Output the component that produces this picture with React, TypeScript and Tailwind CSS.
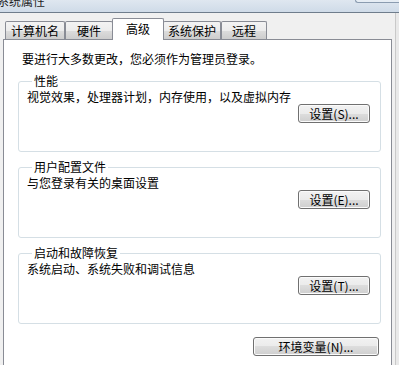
import React from 'react';

const font = "font-['Noto_Sans_CJK_SC','Noto_Sans_CJK_JP',sans-serif]";

const Tab = ({ label, width, active }: { label: string; width: string; active?: boolean }) =>
  active ? (
    <div
      className={`${width} h-[22px] -mb-px -mx-px z-10 bg-white border border-b-0 border-[#898c95] rounded-t-[2px] flex items-start justify-center pt-[3px] text-[12px] leading-[14px] text-black`}
    >
      {label}
    </div>
  ) : (
    <div
      className={`${width} h-[18px] bg-[linear-gradient(to_bottom,#f3f3f3_0%,#ececec_50%,#dddddd_50%,#cdcdcd_100%)] border border-b-0 border-[#898c95] rounded-t-[2px] flex items-center justify-center text-[12px] leading-[14px] text-black`}
    >
      {label}
    </div>
  );

const WinButton = ({ label, width }: { label: string; width: string }) => (
  <button
    className={`${width} h-[19px] border border-[#707070] rounded-[3px] bg-[linear-gradient(to_bottom,#f2f2f2_0%,#ebebeb_50%,#dddddd_50%,#cfcfcf_100%)] shadow-[inset_0_0_0_1px_#fbfbfb] text-[12px] leading-[14px] text-black flex items-center justify-center`}
  >
    {label}
  </button>
);

const Group = ({ title, desc, button }: { title: string; desc: string; button: string }) => (
  <fieldset className="border border-[#d5dfe5] rounded-[3px] h-[78px] mx-[0px] px-[8px] pb-[9px] flex flex-col">
    <legend className="ml-[5px] px-[2px] text-[12px] leading-[14px] text-black">{title}</legend>
    <div className="text-[12px] leading-[14px] text-black pt-[2px]">{desc}</div>
    <div className="flex-1" />
    <div className="flex justify-end pr-[2px]">
      <WinButton label={button} width="w-[72px]" />
    </div>
  </fieldset>
);

export default function App() {
  return (
    <div className={`w-[399px] h-[365px] overflow-hidden bg-[#f0f0f0] flex flex-col ${font}`}>
      {/* title bar remnant */}
      <div className="h-[13px] shrink-0 bg-[linear-gradient(to_bottom,#dfe7f0,#cfdbe8)] border-b border-[#6f7d8c] flex justify-between overflow-hidden">
        <span className="-mt-[6px] -ml-[3px] text-[12px] leading-[14px] text-[#1e1e1e]">系统属性</span>
        <div className="w-[44px] h-[3px] border-b border-l border-[#8b9cb0] rounded-bl-[4px] bg-[#e6edf4]" />
      </div>

      <div className="flex-1 flex">
        <div className="w-[392px] pl-[3px] flex flex-col">
          {/* tabs */}
          <div className="h-[26px] flex items-end pl-[2px] shrink-0">
            <Tab label="计算机名" width="w-[60px]" />
            <Tab label="硬件" width="w-[48px]" />
            <Tab label="高级" width="w-[52px]" active />
            <Tab label="系统保护" width="w-[58px]" />
            <Tab label="远程" width="w-[46px]" />
          </div>

          {/* panel */}
          <div className="flex-1 bg-white border border-b-0 border-[#898c95] pl-[14px] pr-[10px] pt-[12px] flex flex-col">
            <div className="text-[12px] leading-[14px] text-black pl-[4px]">要进行大多数更改，您必须作为管理员登录。</div>
            <div className="mt-[8px] flex flex-col gap-[8px]">
              <Group title="性能" desc="视觉效果，处理器计划，内存使用，以及虚拟内存" button="设置(S)..." />
              <Group title="用户配置文件" desc="与您登录有关的桌面设置" button="设置(E)..." />
              <Group title="启动和故障恢复" desc="系统启动、系统失败和调试信息" button="设置(T)..." />
            </div>
            <div className="mt-[13px] flex justify-end pr-[2px]">
              <WinButton label="环境变量(N)..." width="w-[126px]" />
            </div>
          </div>
        </div>
        <div className="w-[3px]" />
        <div className="w-px bg-[#c9c9c9]" />
        <div className="flex-1 bg-[#e9e9e9]" />
      </div>
    </div>
  );
}
